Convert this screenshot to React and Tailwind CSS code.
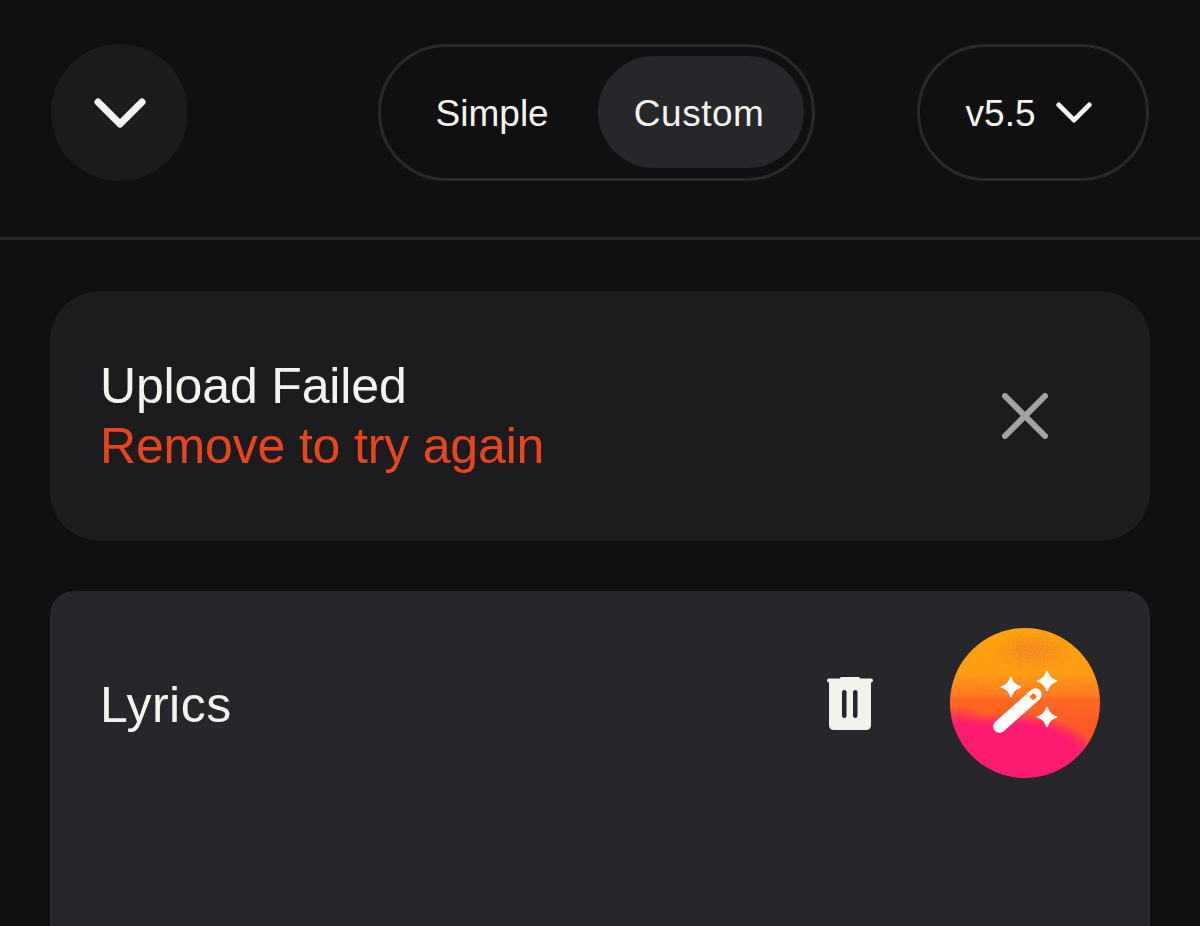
import React from 'react';

const font = { fontFamily: '"Liberation Sans", Arial, sans-serif' };

function Chevron({ className, strokeWidth }) {
  return (
    <svg viewBox="0 0 52 30" className={className} fill="none" stroke="#f5f3ee" strokeWidth={strokeWidth} strokeLinecap="round" strokeLinejoin="round">
      <path d="M4 4 L26 26 L48 4" />
    </svg>
  );
}

function TrashIcon() {
  return (
    <svg width="46" height="54" viewBox="0 0 46 54" fill="#f3f1ec">
      <path d="M13 2 Q13 1 15 1 H31 Q33 1 33 2 L33 2.5 H44 Q46 2.5 46 4.5 Q46 6.5 44 6.5 V49 Q44 54 39 54 H7 Q2 54 2 49 V6.5 Q0 6.5 0 4.5 Q0 2.5 2 2.5 H13 Z" />
      <rect x="15" y="14" width="4.5" height="28" rx="2.2" fill="#26262b" />
      <rect x="26" y="14" width="4.5" height="28" rx="2.2" fill="#26262b" />
    </svg>
  );
}

// four point star, drawn at the origin and moved into place
const SPARKLE = 'M0 -9.5 Q2 -2 9.5 0 Q2 2 0 9.5 Q-2 2 -9.5 0 Q-2 -2 0 -9.5 Z';

function MagicButton() {
  return (
    <div className="relative w-[150px] h-[150px] rounded-full overflow-hidden bg-[radial-gradient(ellipse_60%_36%_at_42%_92%,#ff1b72_78%,transparent_100%),radial-gradient(ellipse_30%_24%_at_6%_76%,#ff1f6c_55%,transparent_100%),radial-gradient(ellipse_28%_14%_at_55%_15%,#f4861c_20%,transparent_100%),linear-gradient(180deg,#ffa008_0%,#ff9810_30%,#ff6a22_47%,#ff5a26_64%,#ff4a30_100%)]">
      <svg viewBox="0 0 150 150" className="absolute inset-0 w-full h-full">
        <filter id="magic-grain" x="0" y="0" width="1" height="1">
          <feTurbulence type="fractalNoise" baseFrequency="0.9" numOctaves="2" />
          <feColorMatrix values="0 0 0 0 1  0 0 0 0 0.72  0 0 0 0 0.05  0 0 0 1.6 -0.6" />
        </filter>
        <rect x="0" y="0" width="150" height="70" filter="url(#magic-grain)" opacity="0.4" />
        <g fill="#ffffff" stroke="#ffffff" strokeWidth="1.6" strokeLinejoin="round">
          <path d={SPARKLE} transform="translate(61 59)" />
          <path d={SPARKLE} transform="translate(97 53)" />
          <path d={SPARKLE} transform="translate(97 89)" />
        </g>
        <path d="M49.5 98.5 L85.5 66.5" stroke="#ffffff" strokeWidth="12.5" strokeLinecap="round" fill="none" />
        <rect x="80.5" y="66" width="5.5" height="5.5" rx="1.5" transform="rotate(45 83.2 68.7)" fill="#ff6a20" />
      </svg>
    </div>
  );
}

export default function App() {
  return (
    <div className="w-[1200px] h-[926px] overflow-hidden bg-[#101012] text-[#f5f3ee]" style={font}>
      <header className="h-[240px] border-b-[3px] border-[#26262a] flex items-start pt-[44px] pl-[51px] pr-[51px]">
        <button className="w-[137px] h-[137px] rounded-full bg-[#1b1b1e] flex items-center justify-center pl-[1px]">
          <Chevron className="w-[52px] h-[30px]" strokeWidth="7" />
        </button>

        <div className="ml-[190px] w-[437px] h-[137px] rounded-full border-[3px] border-[#29292c] flex items-center pl-[55px] pr-[8px] pb-[1px]">
          <span className="text-[37px] w-[162px] pt-[3px]">Simple</span>
          <span className="w-[206px] h-[112px] rounded-full bg-[#26262b] flex items-center justify-center pr-[3px] pt-[3px] text-[37px] tracking-[0.5px]">Custom</span>
        </div>

        <button className="ml-[102px] w-[233px] h-[137px] rounded-full border-[3px] border-[#29292c] flex items-center pl-[46px] gap-[20px]">
          <span className="text-[37px] pt-[2px]">v5.5</span>
          <Chevron className="w-[36px] h-[21px]" strokeWidth="7" />
        </button>
      </header>

      <main className="px-[50px] pt-[51px] flex flex-col gap-[50px]">
        <section className="h-[250px] rounded-[50px] bg-[#1c1c1f] flex items-center justify-between pl-[50px] pr-[102px]">
          <div className="flex flex-col">
            <span className="text-[50px] leading-[60px] tracking-[-0.15px]">Upload Failed</span>
            <span className="text-[50px] leading-[60px] tracking-[-0.17px] text-[#e8451f]">Remove to try again</span>
          </div>
          <svg width="46" height="46" viewBox="0 0 46 46" fill="none" stroke="#a3a3a5" strokeWidth="6" strokeLinecap="round">
            <path d="M3 3 L43 43 M43 3 L3 43" />
          </svg>
        </section>

        <section className="h-[500px] rounded-[24px] bg-[#26262b] flex items-start justify-between px-[50px] pt-[37px]">
          <span className="text-[50px] leading-[154px] tracking-[0.5px]">Lyrics</span>
          <div className="flex items-center gap-[77px] h-[150px]">
            <TrashIcon />
            <MagicButton />
          </div>
        </section>
      </main>
    </div>
  );
}
